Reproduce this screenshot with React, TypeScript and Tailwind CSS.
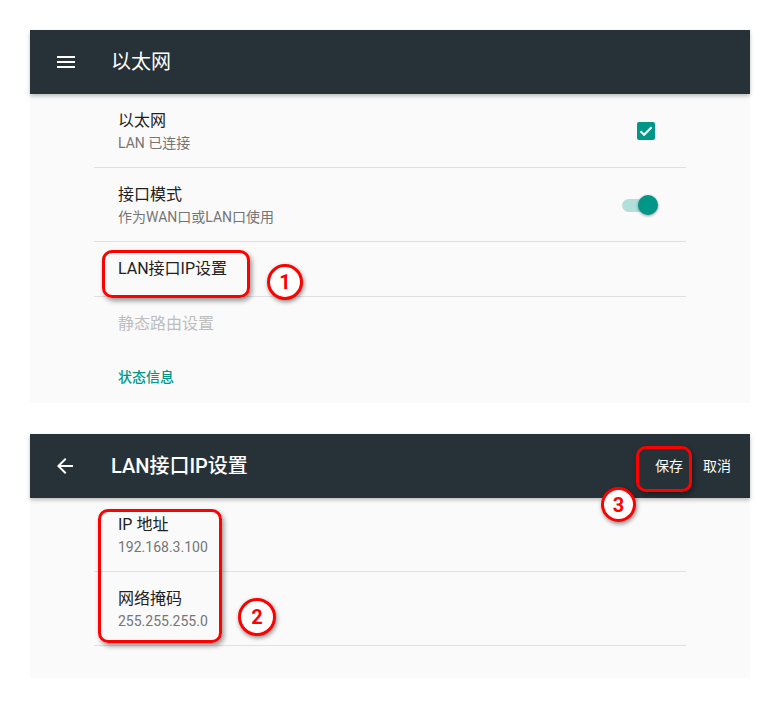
import React from "react";

const font = { fontFamily: 'Roboto, "Noto Sans CJK SC", sans-serif' };

function Header({ icon, title, bold, actions }: { icon: React.ReactNode; title: string; bold?: boolean; actions?: React.ReactNode }) {
  return (
    <div className="relative z-10 flex h-16 items-center bg-[#263238] shadow-[0_2px_4px_rgba(0,0,0,0.25)]">
      <div className="w-[81px]">{icon}</div>
      <div className={`text-[20px] text-white ${bold ? "font-medium" : "font-normal"}`}>{title}</div>
      <div className="ml-auto flex items-center pr-[9px]">{actions}</div>
    </div>
  );
}

function Row({ title, sub, right, tall = true }: { title: string; sub?: string; right?: React.ReactNode; tall?: boolean }) {
  return (
    <div className={`flex items-center border-b border-[#e0e0e0] ${tall ? "h-[74px]" : "h-[55px]"}`}>
      <div className="flex flex-col pl-[24px]">
        <div className="text-[16px] leading-6 text-[#212121]">{title}</div>
        {sub && <div className="text-[14px] leading-5 text-[#757575]">{sub}</div>}
      </div>
      <div className="ml-auto pr-[31px]">{right}</div>
    </div>
  );
}

function Mark({ n, className }: { n: string; className: string }) {
  return (
    <div className={`absolute z-20 flex items-center justify-center rounded-full border-[3px] border-[#f00] bg-white text-[20px] font-bold text-[#f00] shadow-[1px_2px_4px_rgba(0,0,0,0.45)] ${className}`}>
      {n}
    </div>
  );
}

function Box({ className }: { className: string }) {
  return <div className={`absolute z-20 rounded-[10px] border-[3px] border-[#f00] shadow-[2px_3px_5px_rgba(0,0,0,0.4)] ${className}`} />;
}

export default function App() {
  return (
    <div className="relative min-h-[709px] w-[780px] bg-white" style={font}>
      <div className="px-[30px] pt-[30px]">
        <Header
          title="以太网"
          icon={
            <svg className="ml-[27px]" width="18" height="12" viewBox="0 0 18 12">
              <path d="M0 1h18M0 6h18M0 11h18" stroke="white" strokeWidth="2" />
            </svg>
          }
        />
        <div className="bg-[#fafafa]">
          <div className="mx-[64px]">
            <Row
              title="以太网"
              sub="LAN 已连接"
              right={
                <div className="flex h-[18px] w-[18px] items-center justify-center rounded-[2px] bg-[#009688]">
                  <svg width="18" height="18" viewBox="0 0 18 18">
                    <path d="M3.5 9.2l3.6 3.5L14.6 5.3" fill="none" stroke="white" strokeWidth="2.2" />
                  </svg>
                </div>
              }
            />
            <Row
              title="接口模式"
              sub="作为WAN口或LAN口使用"
              right={
                <div className="relative mr-[-3px] h-[20px] w-[36px]">
                  <div className="absolute left-0 top-[4px] h-[13px] w-[30px] rounded-full bg-[#b2dfdb]" />
                  <div className="absolute right-0 top-0 h-[20px] w-[20px] rounded-full bg-[#009688] shadow-[0_1px_3px_rgba(0,0,0,0.4)]" />
                </div>
              }
            />
            <Row title="LAN接口IP设置" tall={false} />
            <div className="flex h-[54px] items-center pl-[24px] text-[16px] text-[#bdbdbd]">静态路由设置</div>
            <div className="flex h-[52px] items-center pl-[24px] text-[14px] font-medium text-[#009688]">状态信息</div>
          </div>
        </div>
      </div>

      <div className="px-[30px] pt-[31px] pb-[31px]">
        <Header
          title="LAN接口IP设置"
          bold
          icon={
            <svg className="ml-[23px]" width="24" height="24" viewBox="0 0 24 24">
              <path d="M20 11H7.83l5.59-5.59L12 4l-8 8 8 8 1.41-1.41L7.83 13H20v-2z" fill="white" />
            </svg>
          }
          actions={
            <>
              <div className="px-[10px] text-[14px] text-white">保存</div>
              <div className="px-[10px] text-[14px] text-white">取消</div>
            </>
          }
        />
        <div className="bg-[#fafafa] pb-[32px]">
          <div className="mx-[64px]">
            <Row title="IP 地址" sub="192.168.3.100" />
            <Row title="网络掩码" sub="255.255.255.0" />
          </div>
        </div>
      </div>

      <Box className="left-[102px] top-[250px] h-[48px] w-[148px]" />
      <Mark n="1" className="left-[267px] top-[264px] h-[36px] w-[36px]" />
      <Box className="left-[98px] top-[509px] h-[134px] w-[124px]" />
      <Mark n="2" className="left-[238px] top-[598px] h-[38px] w-[38px]" />
      <Box className="left-[636px] top-[446px] h-[46px] w-[56px]" />
      <Mark n="3" className="left-[601px] top-[487px] h-[35px] w-[35px]" />
    </div>
  );
}
